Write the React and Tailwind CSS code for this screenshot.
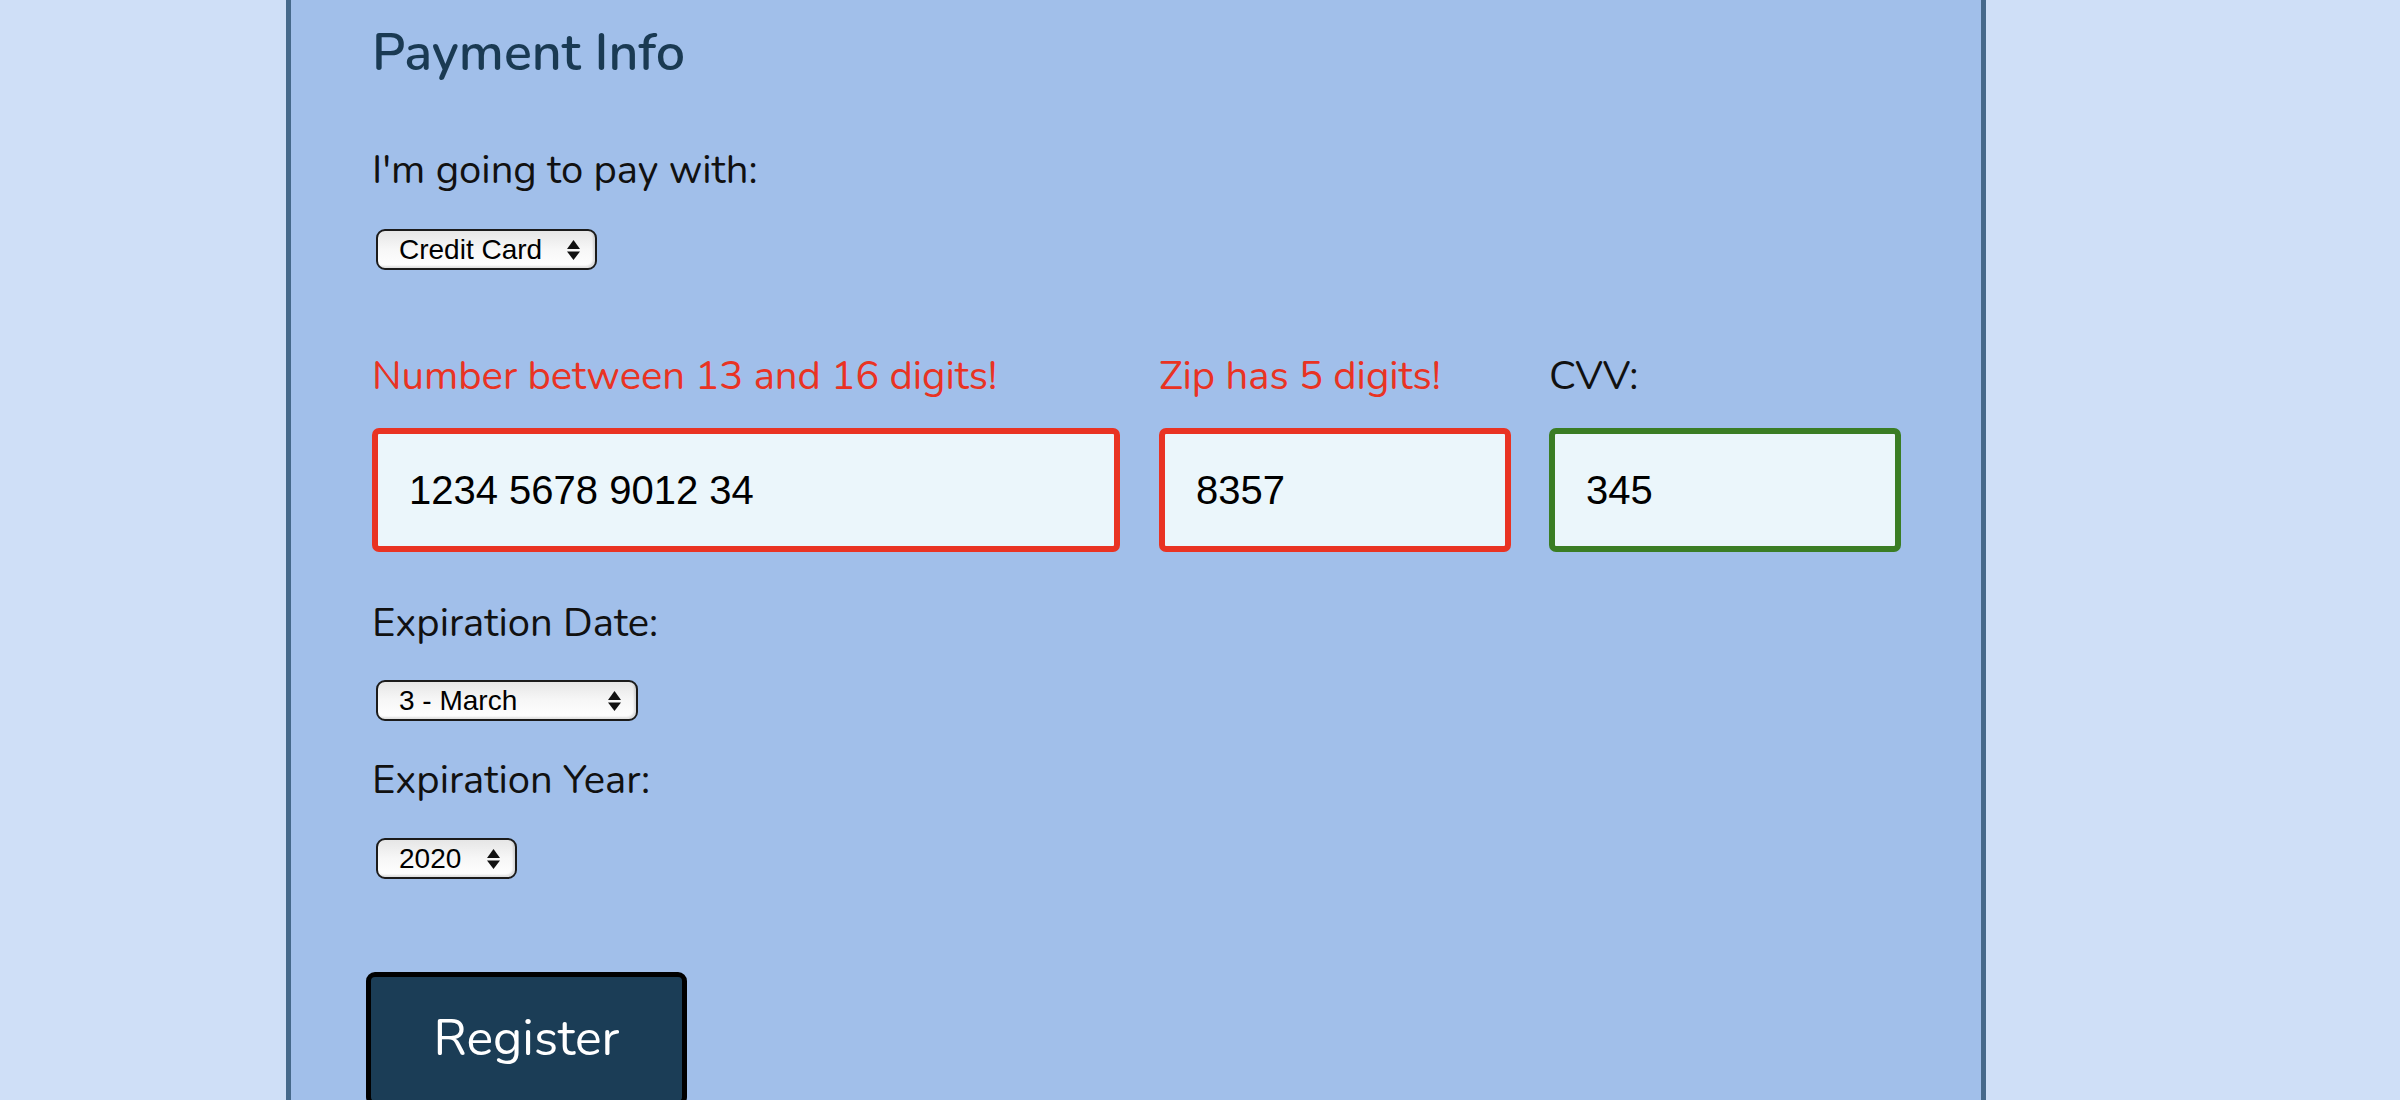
import React from "react";

const SANS = "font-['Nunito','Lato',sans-serif]";

function Arrows() {
  return (
    <svg width="13" height="20" viewBox="0 0 13 20" className="shrink-0">
      <polygon points="0,9 6.5,0 13,9" fill="#111" />
      <polygon points="0,11.5 13,11.5 6.5,20" fill="#111" />
    </svg>
  );
}

function FakeSelect({ value, widthClass }) {
  return (
    <div
      className={`${widthClass} h-[41px] flex items-center justify-between pl-[21px] pr-[15px] rounded-[9px] border-2 border-[#1b1b1b] bg-gradient-to-b from-[#e6e6e6] via-[#f7f7f7] to-[#ffffff] shadow-[inset_-2px_-2px_2px_rgba(0,0,0,0.12)] font-['Liberation_Sans',Arial,sans-serif] text-[28px] leading-none text-black`}
    >
      <span>{value}</span>
      <Arrows />
    </div>
  );
}

function Field({ label, error, value, widthClass, ok }) {
  return (
    <div className={`${widthClass} flex flex-col`}>
      <div
        className={`${SANS} text-[40px] leading-none whitespace-nowrap ${
          error ? "text-[#e93323]" : "text-[#111111]"
        }`}
      >
        {label}
      </div>
      <div
        className={`mt-[32px] h-[124px] flex items-center rounded-[7px] border-[6px] ${
          ok ? "border-[#3a7d24]" : "border-[#e93323]"
        } bg-[#ebf6fb] pl-[31px] font-['Liberation_Sans',Arial,sans-serif] text-[40px] leading-none text-black`}
      >
        {value}
      </div>
    </div>
  );
}

export default function App() {
  return (
    <div className="h-[1100px] w-full overflow-hidden bg-[#cfdff7]">
      <div className="ml-[286px] w-[1700px] h-[1100px] border-x-[5px] border-[#46698b] bg-[#a1bfea] pl-[81px] pt-[27px]">
        <h2 className={`${SANS} text-[52px] leading-none text-[#1a3a53] font-semibold`}>
          Payment Info
        </h2>

        <div className={`${SANS} mt-[71px] text-[40px] leading-none text-[#111111]`}>
          I'm going to pay with:
        </div>
        <div className="mt-[39px] ml-[4px]">
          <FakeSelect value="Credit Card" widthClass="w-[221px]" />
        </div>

        <div className="mt-[86px] flex">
          <Field
            label="Number between 13 and 16 digits!"
            error
            value="1234 5678 9012 34"
            widthClass="w-[748px]"
          />
          <div className="ml-[39px]">
            <Field label="Zip has 5 digits!" error value="8357" widthClass="w-[352px]" />
          </div>
          <div className="ml-[38px]">
            <Field label="CVV:" value="345" widthClass="w-[352px]" ok />
          </div>
        </div>

        <div className={`${SANS} mt-[51px] text-[40px] leading-none text-[#111111]`}>
          Expiration Date:
        </div>
        <div className="mt-[37px] ml-[4px]">
          <FakeSelect value="3 - March" widthClass="w-[262px]" />
        </div>

        <div className={`${SANS} mt-[39px] text-[40px] leading-none text-[#111111]`}>
          Expiration Year:
        </div>
        <div className="mt-[38px] ml-[4px]">
          <FakeSelect value="2020" widthClass="w-[141px]" />
        </div>

        <button
          className={`${SANS} mt-[93px] -ml-[6px] w-[321px] h-[134px] rounded-[9px] border-[5px] border-black bg-[#1b3d56] text-white text-[50px] leading-none flex items-center justify-center`}
        >
          Register
        </button>
      </div>
    </div>
  );
}
